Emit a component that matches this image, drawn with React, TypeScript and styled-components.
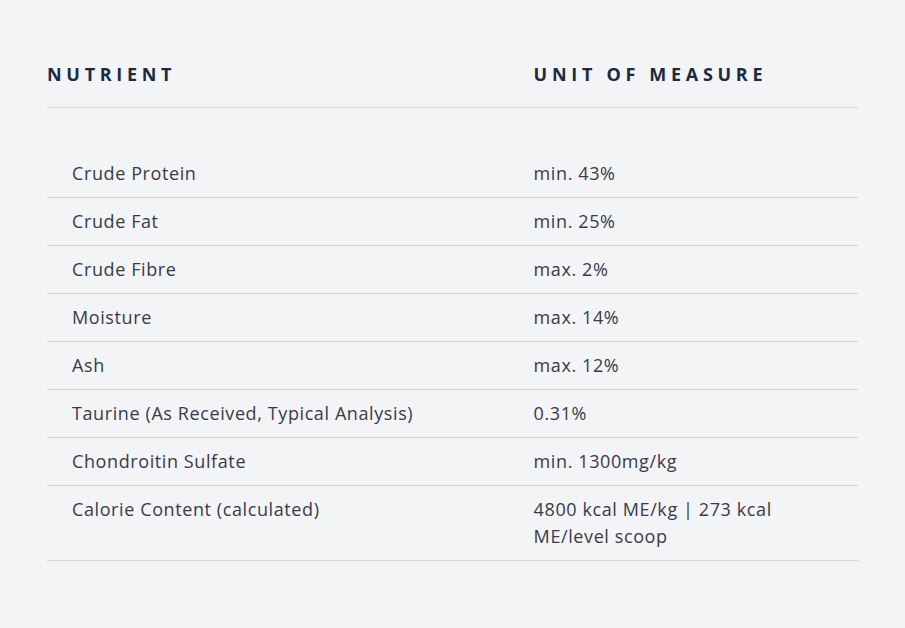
import React from "react";
import styled, { createGlobalStyle } from "styled-components";

const Global = createGlobalStyle`
  html, body { margin: 0; padding: 0; background: #f3f4f6; }
  body { font-family: "Open Sans", "Liberation Sans", sans-serif; }
`;

const Page = styled.div`
  padding: 61px 47px 40px;
  background: #f3f4f6;
  min-height: 628px;
  box-sizing: border-box;
`;

const Table = styled.table`
  width: 100%;
  border-collapse: collapse;
  table-layout: fixed;
`;

const HeadCell = styled.th`
  text-align: left;
  font-family: "Open Sans", "Liberation Sans", sans-serif;
  font-weight: 700;
  font-size: 18px;
  line-height: 27px;
  letter-spacing: 4.7px;
  color: #1b2a41;
  padding: 0 0 19px 0;
  border-bottom: 1px solid #d3d5d9;
`;

const Spacer = styled.tr`
  height: 42px;
`;

const Row = styled.tr`
  border-bottom: 1px solid #d3d5d9;
`;

const Cell = styled.td<{ $indent?: boolean }>`
  vertical-align: top;
  font-size: 18px;
  line-height: 27px;
  letter-spacing: 0.6px;
  color: #393b47;
  padding: 10px 20px 10px ${(p) => (p.$indent ? "25px" : "0")};
`;

const rows: [string, string][] = [
  ["Crude Protein", "min. 43%"],
  ["Crude Fat", "min. 25%"],
  ["Crude Fibre", "max. 2%"],
  ["Moisture", "max. 14%"],
  ["Ash", "max. 12%"],
  ["Taurine (As Received, Typical Analysis)", "0.31%"],
  ["Chondroitin Sulfate", "min. 1300mg/kg"],
  ["Calorie Content (calculated)", "4800 kcal ME/kg | 273 kcal ME/level scoop"],
];

export default function App() {
  return (
    <>
      <Global />
      <Page>
        <Table>
          <colgroup>
            <col style={{ width: "60%" }} />
            <col style={{ width: "40%" }} />
          </colgroup>
          <thead>
            <tr>
              <HeadCell>NUTRIENT</HeadCell>
              <HeadCell>UNIT OF MEASURE</HeadCell>
            </tr>
          </thead>
          <tbody>
            <Spacer />
            {rows.map(([n, v]) => (
              <Row key={n}>
                <Cell $indent>{n}</Cell>
                <Cell>{v}</Cell>
              </Row>
            ))}
          </tbody>
        </Table>
      </Page>
    </>
  );
}
